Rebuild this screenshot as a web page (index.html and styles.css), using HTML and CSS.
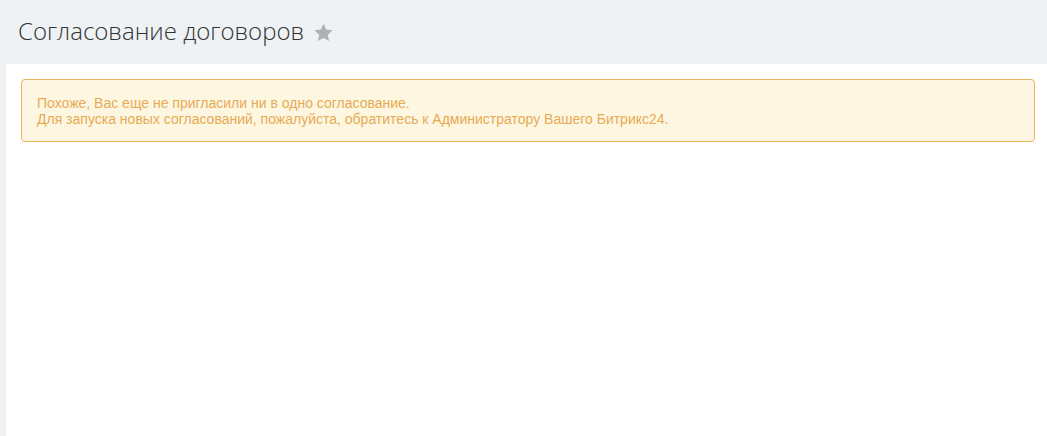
FILE: index.html
```html
<!DOCTYPE html>
<html lang="ru">
<head>
    <meta charset="UTF-8">
    <title>Согласование договоров</title>
    <link rel="stylesheet" href="styles.css">
</head>
<body>
<div class="page_header">
    <h1 class="page_title">Согласование договоров</h1>
    <span class="page_star">
        <svg width="21" height="21" viewBox="0 0 24 24"><path d="M12 2l3.1 6.6 7.3.9-5.4 5 1.4 7.3L12 18.2l-6.4 3.6 1.4-7.3-5.4-5 7.3-.9z" fill="#aeb2b6"/></svg>
    </span>
</div>
<div class="workarea">
    <div class="alert_box">
        Похоже, Вас еще не пригласили ни в одно согласование.<br>
        Для запуска новых согласований, пожалуйста, обратитесь к Администратору Вашего Битрикс24.
    </div>
</div>
</body>
</html>
```

FILE: styles.css
```css
*{margin: 0;padding: 0}
html, body{
    height: 100%;
}
body{
    background: #eef2f4;
    font-family: "Liberation Sans", Arial, sans-serif;
    display: flex;
    flex-direction: column;
}
.page_header{
    height: 64px;
    display: flex;
    align-items: center;
    padding-left: 18px;
    box-sizing: border-box;
    padding-bottom: 4px;
}
    .page_title{
        font-family: "Open Sans", sans-serif;
        font-weight: 300;
        font-size: 24px;
        color: #333;
    }
    .page_star{
        display: flex;
        margin-left: 9px;
        margin-top: 4px;
    }
.workarea{
    flex: 1;
    margin-left: 6px;
    background: #fff;
    padding: 15px 12px 15px 15px;
}
    .alert_box{
        border: 1px solid #e9b65c;
        border-radius: 4px;
        background: #fdf7e2;
        color: #e8aa52;
        font-size: 14px;
        line-height: 16px;
        padding: 15px 15px 14px 15px;
    }
```
